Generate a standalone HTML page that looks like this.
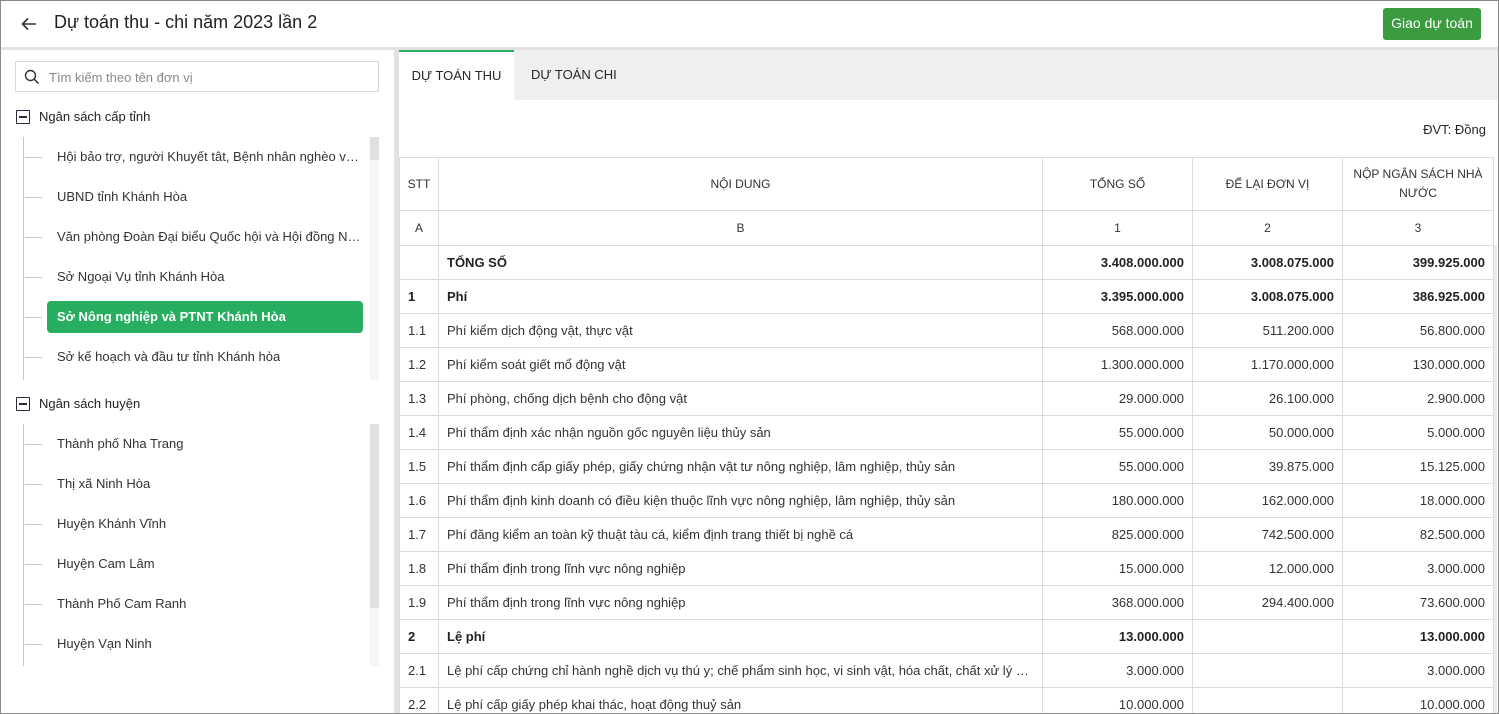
<!DOCTYPE html>
<html><head><meta charset="utf-8"><style>
*{box-sizing:border-box;margin:0;padding:0}
html,body{width:1499px;height:714px;overflow:hidden}
body{font-family:"Liberation Sans",sans-serif;color:#262626;font-size:13px;background:#fff;position:relative}
.frame{position:absolute;left:0;top:0;width:1499px;height:714px;border:1px solid #8a8a8a;pointer-events:none;z-index:10}
.abs{position:absolute}
.hdr{left:0;top:0;width:1499px;height:47px;background:#fff}
.title{left:54px;top:12px;font-size:18px;color:#222}
.btn{left:1383px;top:8px;width:98px;height:32px;background:#3a9c3f;border-radius:3px;color:#fff;font-size:14px;text-align:center;line-height:31px}
.sep1{left:0;top:47px;width:1499px;height:3px;background:#e2e2e2}
.sep2{left:394px;top:50px;width:5px;height:664px;background:#e2e2e2}
.search{left:15px;top:61px;width:364px;height:31px;border:1px solid #d6d6d6;border-radius:2px}
.search span{position:absolute;left:33px;top:8px;color:#888;font-size:13px}
.grp{font-size:13px;color:#222}
.box{width:14px;height:14px;border:1.5px solid #2a2a3a;border-radius:1px}
.box:after{content:"";position:absolute;left:2px;right:2px;top:5px;height:1.5px;background:#2a2a3a}
.vl{width:1px;background:#c8c8c8}
.hl{width:17px;height:1px;background:#c8c8c8}
.it{font-size:13px;color:#333;white-space:nowrap;max-width:304px;overflow:hidden;text-overflow:ellipsis}
.sel{left:47px;top:301px;width:316px;height:32px;background:#27ae60;border-radius:4px}
.tabbar{left:399px;top:50px;width:1100px;height:50px;background:#efefef}
.tab1{left:399px;top:50px;width:115px;height:50px;background:#fff;border-top:2px solid #27ae60;font-size:13px;text-align:center;line-height:48px}
.tab2{left:531px;top:67px;font-size:13px}
table{position:absolute;left:399px;top:157px;border-collapse:collapse;table-layout:fixed;width:1094px}
td{border:1px solid #dcdcdc;height:34px;padding:0 8px;font-size:13px;white-space:nowrap;overflow:hidden;text-overflow:ellipsis;color:#333}
td:first-child{padding:0 0 0 8px;text-overflow:clip}
td.r{text-align:right}
tr.b td{font-weight:bold;color:#222}
.h td{text-align:center;height:53px;font-size:12px;line-height:19px;white-space:normal}
.h2 td{text-align:center;height:35px;font-size:12px}
.h td:first-child,.h2 td:first-child{padding:0}
</style></head><body>
<div class="frame"></div>
<div class="abs hdr"></div>
<svg class="abs" style="left:20px;top:15px" width="18" height="18" viewBox="0 0 18 18"><path d="M16 9H3M8 3.5L2.5 9 8 14.5" stroke="#333" stroke-width="1.6" fill="none"/></svg>
<div class="abs title">Dự toán thu - chi năm 2023 lần 2</div>
<div class="abs btn">Giao dự toán</div>
<div class="abs sep1"></div>
<div class="abs sep2"></div>

<div class="abs search"><svg style="position:absolute;left:8px;top:7px" width="16" height="16" viewBox="0 0 16 16"><circle cx="6.5" cy="6.5" r="5" stroke="#333" stroke-width="1.4" fill="none"/><path d="M10.3 10.3L14.5 14.5" stroke="#333" stroke-width="1.5"/></svg><span>Tìm kiếm theo tên đơn vị</span></div>

<div class="abs box" style="left:16px;top:110px"></div>
<div class="abs grp" style="left:39px;top:109px">Ngân sách cấp tỉnh</div>
<div class="abs vl" style="left:23px;top:137px;height:243px"></div>
<div class="abs" style="left:370px;top:137px;width:9px;height:243px;background:#f5f5f5"></div>
<div class="abs" style="left:370px;top:137px;width:9px;height:23px;background:#e0e0e0"></div>
<div class="abs sel"></div>
<div class="abs hl" style="left:25px;top:157px"></div><div class="abs it" style="left:57px;top:149px">Hội bảo trợ, người Khuyết tât, Bệnh nhân nghèo và người khác</div>
<div class="abs hl" style="left:25px;top:197px"></div><div class="abs it" style="left:57px;top:189px">UBND tỉnh Khánh Hòa</div>
<div class="abs hl" style="left:25px;top:237px"></div><div class="abs it" style="left:57px;top:229px">Văn phòng Đoàn Đại biểu Quốc hội và Hội đồng Nhân dân</div>
<div class="abs hl" style="left:25px;top:277px"></div><div class="abs it" style="left:57px;top:269px">Sở Ngoại Vụ tỉnh Khánh Hòa</div>
<div class="abs hl" style="left:25px;top:317px"></div><div class="abs it" style="left:57px;top:309px;color:#fff;font-weight:bold">Sở Nông nghiệp và PTNT Khánh Hòa</div>
<div class="abs hl" style="left:25px;top:357px"></div><div class="abs it" style="left:57px;top:349px">Sở kế hoạch và đầu tư tỉnh Khánh hòa</div>

<div class="abs box" style="left:16px;top:397px"></div>
<div class="abs grp" style="left:39px;top:396px">Ngân sách huyện</div>
<div class="abs vl" style="left:23px;top:424px;height:242px"></div>
<div class="abs" style="left:370px;top:424px;width:9px;height:242px;background:#f5f5f5"></div>
<div class="abs" style="left:370px;top:424px;width:9px;height:184px;background:#e0e0e0"></div>
<div class="abs hl" style="left:25px;top:444px"></div><div class="abs it" style="left:57px;top:436px">Thành phố Nha Trang</div>
<div class="abs hl" style="left:25px;top:484px"></div><div class="abs it" style="left:57px;top:476px">Thị xã Ninh Hòa</div>
<div class="abs hl" style="left:25px;top:524px"></div><div class="abs it" style="left:57px;top:516px">Huyện Khánh Vĩnh</div>
<div class="abs hl" style="left:25px;top:564px"></div><div class="abs it" style="left:57px;top:556px">Huyện Cam Lâm</div>
<div class="abs hl" style="left:25px;top:604px"></div><div class="abs it" style="left:57px;top:596px">Thành Phố Cam Ranh</div>
<div class="abs hl" style="left:25px;top:644px"></div><div class="abs it" style="left:57px;top:636px">Huyện Vạn Ninh</div>

<div class="abs tabbar"></div>
<div class="abs tab1">DỰ TOÁN THU</div>
<div class="abs tab2">DỰ TOÁN CHI</div>
<div class="abs" style="right:13px;top:122px;font-size:13px">ĐVT: Đồng</div>
<div class="abs" style="left:1493px;top:245px;width:4px;height:469px;background:#ececec"></div>

<table>
<colgroup><col style="width:39px"><col style="width:604px"><col style="width:150px"><col style="width:150px"><col style="width:151px"></colgroup>
<tr class="h"><td>STT</td><td>NỘI DUNG</td><td>TỔNG SỐ</td><td>ĐỂ LẠI ĐƠN VỊ</td><td>NỘP NGÂN SÁCH NHÀ NƯỚC</td></tr>
<tr class="h2"><td>A</td><td>B</td><td>1</td><td>2</td><td>3</td></tr>
<tr class="b"><td></td><td>TỔNG SỐ</td><td class="r">3.408.000.000</td><td class="r">3.008.075.000</td><td class="r">399.925.000</td></tr>
<tr class="b"><td>1</td><td>Phí</td><td class="r">3.395.000.000</td><td class="r">3.008.075.000</td><td class="r">386.925.000</td></tr>
<tr><td>1.1</td><td>Phí kiểm dịch động vật, thực vật</td><td class="r">568.000.000</td><td class="r">511.200.000</td><td class="r">56.800.000</td></tr>
<tr><td>1.2</td><td>Phí kiểm soát giết mổ động vật</td><td class="r">1.300.000.000</td><td class="r">1.170.000.000</td><td class="r">130.000.000</td></tr>
<tr><td>1.3</td><td>Phí phòng, chống dịch bệnh cho động vật</td><td class="r">29.000.000</td><td class="r">26.100.000</td><td class="r">2.900.000</td></tr>
<tr><td>1.4</td><td>Phí thẩm định xác nhận nguồn gốc nguyên liệu thủy sản</td><td class="r">55.000.000</td><td class="r">50.000.000</td><td class="r">5.000.000</td></tr>
<tr><td>1.5</td><td>Phí thẩm định cấp giấy phép, giấy chứng nhận vật tư nông nghiệp, lâm nghiệp, thủy sản</td><td class="r">55.000.000</td><td class="r">39.875.000</td><td class="r">15.125.000</td></tr>
<tr><td>1.6</td><td>Phí thẩm định kinh doanh có điều kiện thuộc lĩnh vực nông nghiệp, lâm nghiệp, thủy sản</td><td class="r">180.000.000</td><td class="r">162.000.000</td><td class="r">18.000.000</td></tr>
<tr><td>1.7</td><td>Phí đăng kiểm an toàn kỹ thuật tàu cá, kiểm định trang thiết bị nghề cá</td><td class="r">825.000.000</td><td class="r">742.500.000</td><td class="r">82.500.000</td></tr>
<tr><td>1.8</td><td>Phí thẩm định trong lĩnh vực nông nghiệp</td><td class="r">15.000.000</td><td class="r">12.000.000</td><td class="r">3.000.000</td></tr>
<tr><td>1.9</td><td>Phí thẩm định trong lĩnh vực nông nghiệp</td><td class="r">368.000.000</td><td class="r">294.400.000</td><td class="r">73.600.000</td></tr>
<tr class="b"><td>2</td><td>Lệ phí</td><td class="r">13.000.000</td><td class="r"></td><td class="r">13.000.000</td></tr>
<tr><td>2.1</td><td>Lệ phí cấp chứng chỉ hành nghề dịch vụ thú y; chế phẩm sinh học, vi sinh vật, hóa chất, chất xử lý cải tạo môi trường</td><td class="r">3.000.000</td><td class="r"></td><td class="r">3.000.000</td></tr>
<tr><td>2.2</td><td>Lệ phí cấp giấy phép khai thác, hoạt động thuỷ sản</td><td class="r">10.000.000</td><td class="r"></td><td class="r">10.000.000</td></tr>
</table>
</body></html>
